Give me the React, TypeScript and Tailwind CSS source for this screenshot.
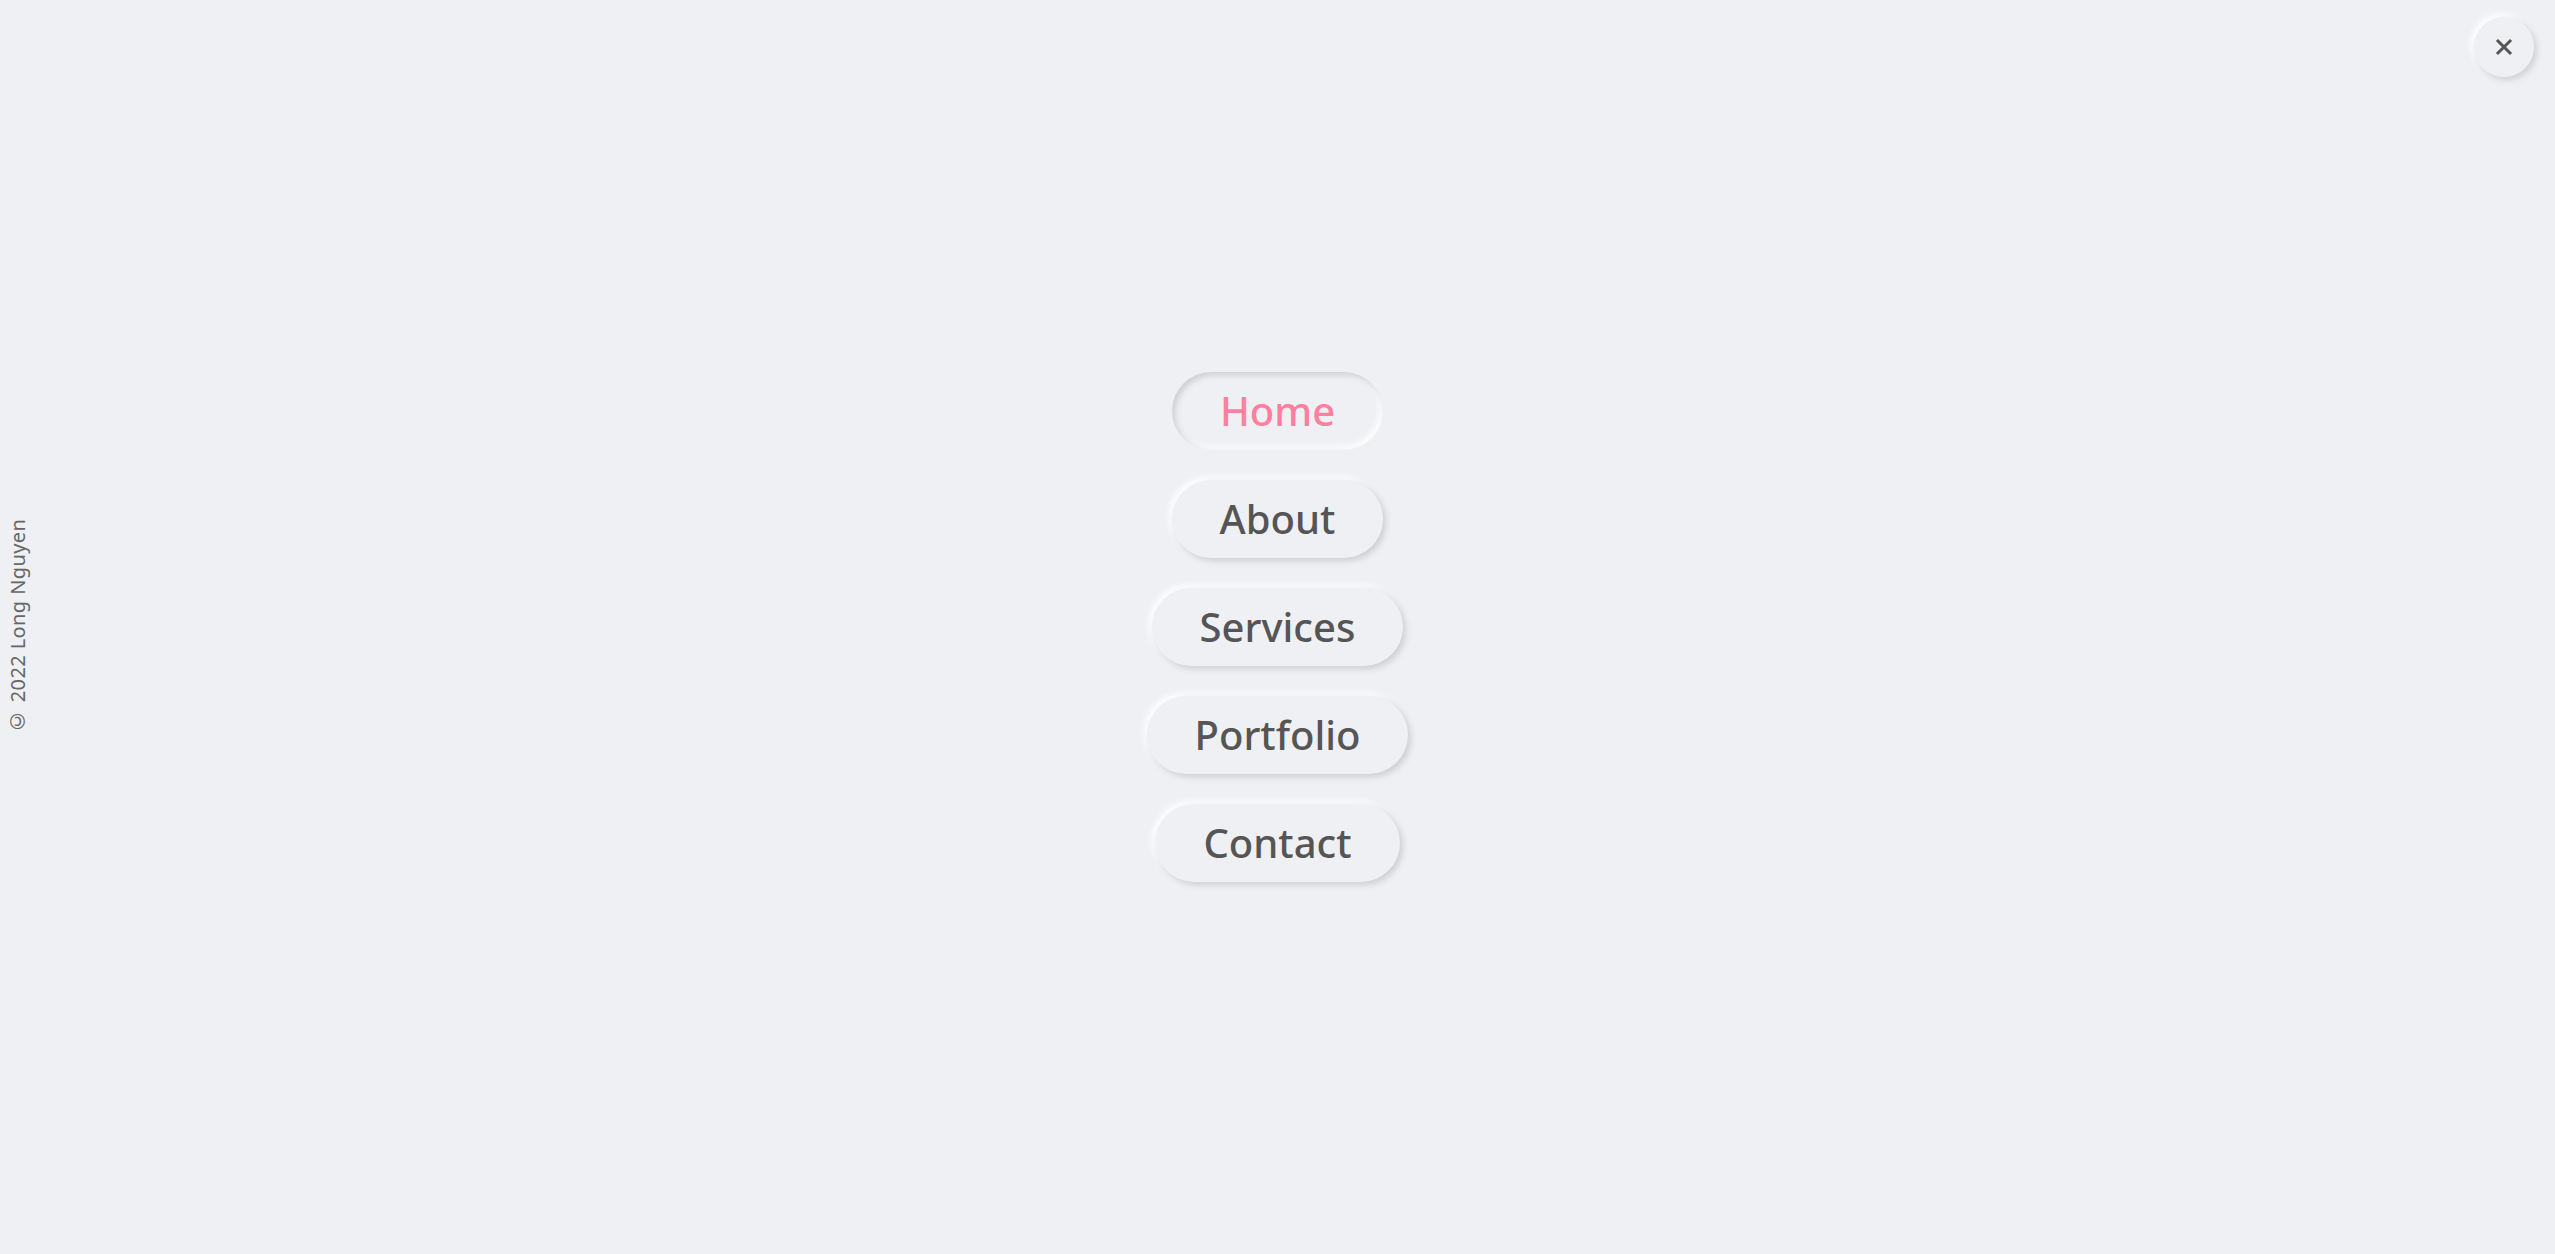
const links = ["Home", "About", "Services", "Portfolio", "Contact"];

export default function App() {
  return (
    <div className="relative flex h-[1254px] w-full items-center justify-center overflow-hidden bg-[#eff0f4] font-['Noto_Sans',sans-serif]">
      <div className="absolute left-[3px] top-1/2 -translate-y-1/2">
        <p className="w-[24px] whitespace-nowrap text-[20px] tracking-[0.4px] text-[#666] [writing-mode:vertical-rl] rotate-180">
          © 2022 Long Nguyen
        </p>
      </div>

      <button className="absolute right-[21px] top-[17px] flex h-[60px] w-[60px] items-center justify-center rounded-full bg-[#eff0f4] shadow-[3px_3px_6px_#cfd0d4,-3px_-3px_6px_#ffffff]">
        <svg width="18" height="18" viewBox="0 0 18 18" fill="none" stroke="#555" strokeWidth="3" strokeLinecap="square">
          <path d="M3 3l12 12M15 3L3 15" />
        </svg>
      </button>

      <nav className="flex flex-col items-center gap-[30px]">
        {links.map((label, i) => (
          <a
            key={label}
            href="#"
            className={
              i === 0
                ? "flex h-[78px] items-center rounded-full bg-[#eff0f4] px-[48px] text-[40px] font-medium text-[#ff7f9f] shadow-[inset_3px_3px_6px_#cdced2,inset_-3px_-3px_6px_#ffffff]"
                : "flex h-[78px] items-center rounded-full bg-[#eff0f4] px-[48px] text-[40px] font-medium text-[#555] shadow-[3px_3px_6px_#cdced2,-3px_-3px_6px_#ffffff]"
            }
          >
            {label}
          </a>
        ))}
      </nav>
    </div>
  );
}
